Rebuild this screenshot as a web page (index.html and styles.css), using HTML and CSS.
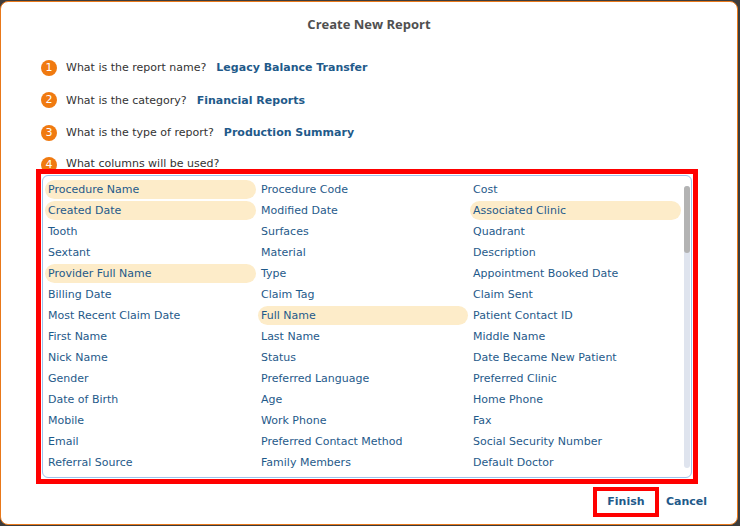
FILE: index.html
```html
<!DOCTYPE html>
<html>
<head>
<meta charset="utf-8">
<link rel="stylesheet" href="styles.css">
</head>
<body>
<div class="dialog">
  <h1 class="title">Create New Report</h1>
  <div class="steps">
    <div class="step"><span class="num">1</span><span class="q">What is the report name?</span><span class="ans">Legacy Balance Transfer</span></div>
    <div class="step"><span class="num">2</span><span class="q">What is the category?</span><span class="ans">Financial Reports</span></div>
    <div class="step"><span class="num">3</span><span class="q">What is the type of report?</span><span class="ans">Production Summary</span></div>
    <div class="step last"><span class="num">4</span><span class="q">What columns will be used?</span></div>
  </div>
  <div class="redbox">
    <div class="listbox">
      <div class="grid">
        <div class="item sel">Procedure Name</div><div class="item">Procedure Code</div><div class="item">Cost</div>
        <div class="item sel">Created Date</div><div class="item">Modified Date</div><div class="item sel">Associated Clinic</div>
        <div class="item">Tooth</div><div class="item">Surfaces</div><div class="item">Quadrant</div>
        <div class="item">Sextant</div><div class="item">Material</div><div class="item">Description</div>
        <div class="item sel">Provider Full Name</div><div class="item">Type</div><div class="item">Appointment Booked Date</div>
        <div class="item">Billing Date</div><div class="item">Claim Tag</div><div class="item">Claim Sent</div>
        <div class="item">Most Recent Claim Date</div><div class="item sel">Full Name</div><div class="item">Patient Contact ID</div>
        <div class="item">First Name</div><div class="item">Last Name</div><div class="item">Middle Name</div>
        <div class="item">Nick Name</div><div class="item">Status</div><div class="item">Date Became New Patient</div>
        <div class="item">Gender</div><div class="item">Preferred Language</div><div class="item">Preferred Clinic</div>
        <div class="item">Date of Birth</div><div class="item">Age</div><div class="item">Home Phone</div>
        <div class="item">Mobile</div><div class="item">Work Phone</div><div class="item">Fax</div>
        <div class="item">Email</div><div class="item">Preferred Contact Method</div><div class="item">Social Security Number</div>
        <div class="item">Referral Source</div><div class="item">Family Members</div><div class="item">Default Doctor</div>
      </div>
      <div class="scrollbar"><div class="thumb"></div></div>
    </div>
  </div>
  <div class="actions">
    <div class="finish-wrap"><button class="btn finish">Finish</button></div>
    <button class="btn cancel">Cancel</button>
  </div>
</div>
</body>
</html>
```
FILE: styles.css
```css
html, body {
  margin: 0;
  padding: 0;
}
body {
  background: #3c3c3c;
  width: 740px;
  height: 526px;
  overflow: hidden;
  font-family: "DejaVu Sans", Verdana, sans-serif;
}
.dialog {
  box-sizing: border-box;
  margin-top: 1px;
  width: 738px;
  height: 524px;
  background: #fff;
  border: 1px solid #e8781a;
  border-radius: 8px;
  display: flex;
  flex-direction: column;
}
.title {
  margin: 0;
  padding-top: 13px;
  height: 18px;
  text-align: center;
  font-family: "Open Sans", sans-serif;
  font-weight: 700;
  font-size: 13px;
  line-height: 18px;
  color: #505050;
}
.steps {
  margin-top: 26px;
  padding-left: 40px;
  display: flex;
  flex-direction: column;
  gap: 15.5px;
}
.step {
  display: flex;
  align-items: center;
  height: 17px;
  font-size: 11px;
}
.num {
  width: 16px;
  height: 16px;
  border-radius: 50%;
  background: #f07a10;
  color: #fff;
  font-size: 11px;
  line-height: 16px;
  text-align: center;
  margin-right: 9px;
  flex: none;
}
.q {
  color: #333;
}
.ans {
  color: #1f5a8a;
  font-weight: bold;
  margin-left: 10px;
}
.step.last {
  height: 12px;
  align-items: flex-start;
  overflow: visible;
}
.redbox {
  margin-left: 35px;
  margin-top: 0;
  width: 662px;
  height: 315px;
  box-sizing: border-box;
  border: 5px solid #ff0000;
  background: #fff;
  padding: 1px;
  position: relative;
}
.listbox {
  box-sizing: border-box;
  height: 100%;
  border: 1px solid #9cc3ee;
  border-radius: 6px;
  display: flex;
  padding: 4px 0 0 2px;
  overflow: hidden;
}
.grid {
  display: grid;
  grid-template-columns: 211px 210px 211px;
  column-gap: 2px;
  grid-auto-rows: 19px;
  row-gap: 2px;
  align-content: start;
}
.item {
  font-size: 11px;
  line-height: 19px;
  color: #1f5a8a;
  padding-left: 3px;
  border-radius: 10px;
  white-space: nowrap;
}
.item.sel {
  background: #fdecc9;
}
.scrollbar {
  margin-left: 3px;
  margin-top: 6px;
  width: 6px;
  height: 282px;
  background: #dfe4ee;
  border-radius: 3px;
  flex: none;
}
.thumb {
  width: 6px;
  height: 67px;
  border-radius: 3px;
  background: #b3b3b3;
}
.actions {
  display: flex;
  justify-content: flex-end;
  align-items: center;
  padding-right: 30px;
  margin-top: 3px;
  gap: 7px;
}
.finish-wrap {
  border: 4px solid #ff0000;
  width: 58px;
  height: 22px;
  display: flex;
  align-items: center;
  justify-content: center;
  background: #fff;
}
.btn {
  background: none;
  border: none;
  padding: 0;
  font-family: "DejaVu Sans", Verdana, sans-serif;
  font-size: 11px;
  font-weight: bold;
  color: #1f5a8a;
}
```
